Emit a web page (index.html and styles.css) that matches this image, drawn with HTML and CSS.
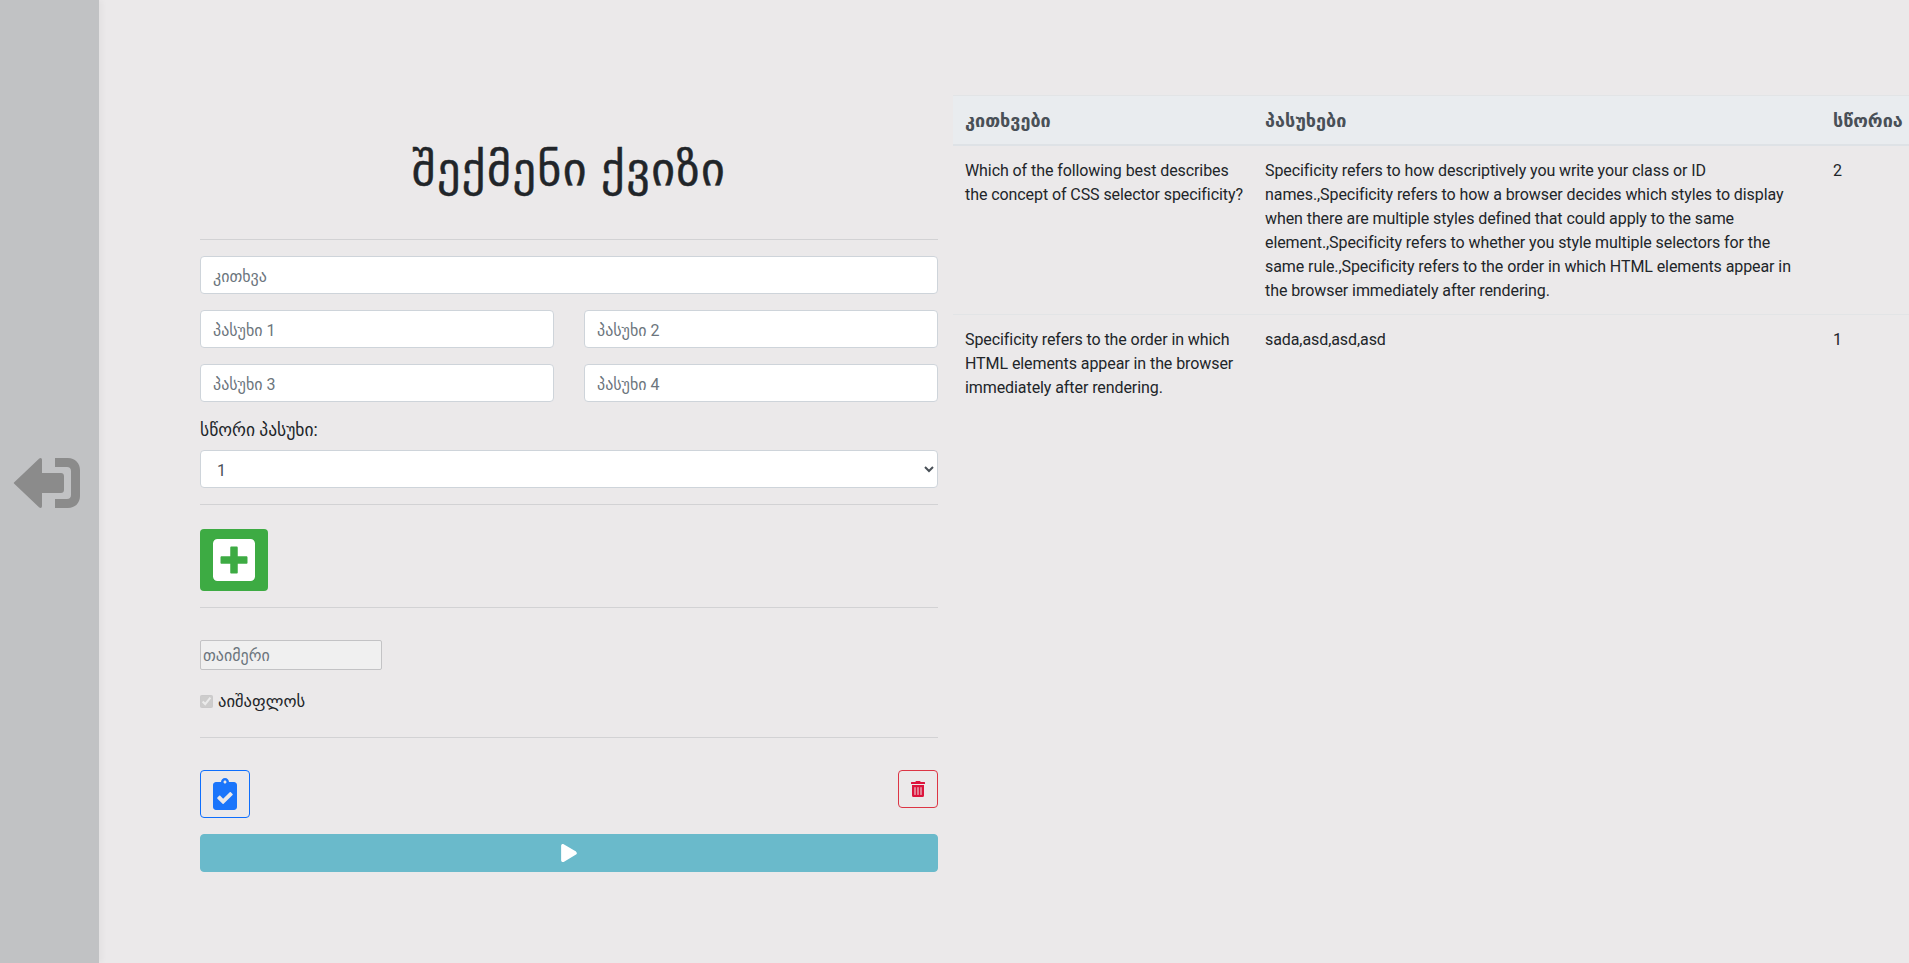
FILE: index.html
```html
<!DOCTYPE html>
<html lang="ka">
<head>
<meta charset="utf-8">
<title>ქვიზი</title>
<link rel="stylesheet" href="styles.css">
</head>
<body>
<aside class="side">
  <svg class="exit" viewBox="0 0 68 52" aria-hidden="true"><path d="M1 25.500 26 1.800c1.500-1.400 3-.8 3 1.200V16h19c1.700 0 3 1.300 3 3v14c0 1.700-1.300 3-3 3H29v13c0 2-1.500 2.600-3 1.200L1 26.500a.7.7 0 0 1 0-1z"/><path d="M42 1h13c7 0 12 5 12 12v26c0 7-5 12-12 12H42v-9h12c2.500 0 4-1.500 4-4V14c0-2.500-1.500-4-4-4H42z"/></svg>
</aside>
<main class="main">
  <section class="form">
    <h1 class="title">შექმენი ქვიზი</h1>
    <hr class="rule rule-first">
    <input class="field" type="text" placeholder="კითხვა">
    <div class="pair">
      <input class="field" type="text" placeholder="პასუხი 1">
      <input class="field" type="text" placeholder="პასუხი 2">
    </div>
    <div class="pair">
      <input class="field" type="text" placeholder="პასუხი 3">
      <input class="field" type="text" placeholder="პასუხი 4">
    </div>
    <label class="lbl" for="correct">სწორი პასუხი:</label>
    <select class="field pick" id="correct"><option>1</option><option>2</option><option>3</option><option>4</option></select>
    <hr class="rule rule-mid">
    <button class="add" type="button" aria-label="add">
      <svg viewBox="0 0 448 512"><path d="M400 32H48C21.500 32 0 53.500 0 80v352c0 26.500 21.500 48 48 48h352c26.500 0 48-21.500 48-48V80c0-26.500-21.500-48-48-48zm-32 252c0 6.600-5.400 12-12 12h-92v92c0 6.600-5.400 12-12 12h-56c-6.600 0-12-5.400-12-12v-92H92c-6.600 0-12-5.400-12-12v-56c0-6.600 5.400-12 12-12h92v-92c0-6.600 5.400-12 12-12h56c6.600 0 12 5.400 12 12v92h92c6.600 0 12 5.400 12 12v56z"/></svg>
    </button>
    <hr class="rule rule-add">
    <input class="timer" type="text" placeholder="თაიმერი" disabled>
    <label class="check"><input type="checkbox" checked disabled><span>აიშაფლოს</span></label>
    <hr class="rule rule-check">
    <div class="actions">
      <button class="save" type="button" aria-label="save">
        <svg viewBox="0 0 384 512"><path d="M336 64h-80c0-35.300-28.700-64-64-64s-64 28.700-64 64H48C21.500 64 0 85.500 0 112v352c0 26.500 21.500 48 48 48h288c26.500 0 48-21.500 48-48V112c0-26.500-21.500-48-48-48zM192 40c13.300 0 24 10.700 24 24s-10.700 24-24 24-24-10.700-24-24 10.700-24 24-24zm121.200 231.800l-143 141.800c-4.700 4.700-12.300 4.600-17-.1l-82.600-83.300c-4.700-4.700-4.600-12.300.1-17L99.100 285c4.700-4.700 12.300-4.600 17 .1l46 46.400 106-105.200c4.700-4.700 12.300-4.600 17 .1l28.200 28.400c4.700 4.800 4.600 12.300-.1 17z"/></svg>
      </button>
      <button class="del" type="button" aria-label="delete">
        <svg viewBox="0 0 448 512"><path d="M32 464a48 48 0 0 0 48 48h288a48 48 0 0 0 48-48V128H32zm272-256a16 16 0 0 1 32 0v224a16 16 0 0 1-32 0zm-96 0a16 16 0 0 1 32 0v224a16 16 0 0 1-32 0zm-96 0a16 16 0 0 1 32 0v224a16 16 0 0 1-32 0zM432 32H312l-9.400-18.700A24 24 0 0 0 281.100 0H166.800a23.720 23.720 0 0 0-21.400 13.300L136 32H16A16 16 0 0 0 0 48v32a16 16 0 0 0 16 16h416a16 16 0 0 0 16-16V48a16 16 0 0 0-16-16z"/></svg>
      </button>
    </div>
    <button class="start" type="button" aria-label="start">
      <svg viewBox="0 0 448 512"><path d="M424.400 214.700L72.400 6.600C43.800-10.300 0 6.100 0 47.900V464c0 39.400 42.700 63.200 72.400 45.300l352-208c31.400-18.500 31.500-64.100 0-82.600z"/></svg>
    </button>
  </section>
  <section class="list">
    <table class="tbl">
      <thead><tr><th class="c1">კითხვები</th><th class="c2">პასუხები</th><th class="c3">სწორია</th></tr></thead>
      <tbody>
        <tr><td>Which of the following best describes the concept of CSS selector specificity?</td><td>Specificity refers to how descriptively you write your class or ID names.,Specificity refers to how a browser decides which styles to display when there are multiple styles defined that could apply to the same element.,Specificity refers to whether you style multiple selectors for the same rule.,Specificity refers to the order in which HTML elements appear in the browser immediately after rendering.</td><td>2</td></tr>
        <tr><td>Specificity refers to the order in which HTML elements appear in the browser immediately after rendering.</td><td>sada,asd,asd,asd</td><td>1</td></tr>
      </tbody>
    </table>
  </section>
</main>
</body>
</html>
```

FILE: styles.css
```css
* { box-sizing: border-box; }
html, body { height: 100%; }
body {
  margin: 0;
  display: flex;
  overflow: hidden;
  background: #ebe9ea;
  color: #212529;
  font-family: Roboto, "Open Sans", "DejaVu Sans", sans-serif;
  font-size: 16px;
  line-height: 24px;
}
.side {
  width: 99px;
  flex: none;
  display: flex;
  align-items: center;
  background: #c1c2c4;
  box-shadow: 3px 0 6px rgba(0,0,0,.04);
  padding-left: 13px;
  padding-top: 2px;
}
.exit { width: 68px; height: 52px; fill: #8b8b8b; }
.main { flex: 1; display: flex; min-width: 0; padding-left: 101px; }
.form { width: 738px; flex: none; display: flex; flex-direction: column; align-items: stretch; }
.title {
  margin: 141px 0 0;
  font-size: 46px;
  line-height: 56px;
  font-weight: 500;
  letter-spacing: 1.500px;
  text-align: center;
  -webkit-text-stroke: .5px #212529;
}
.rule { width: 100%; margin: 0; border: 0; border-top: 1px solid #d2d2d4; }
.rule-first { margin-top: 42px; margin-bottom: 16px; }
.rule-mid { margin-top: 16px; margin-bottom: 24px; }
.rule-add { margin-top: 16px; margin-bottom: 32px; }
.rule-check { margin-top: 24px; margin-bottom: 32px; }
.field {
  display: block;
  width: 100%;
  height: 38px;
  padding: 7px 12px 5px;
  border: 1px solid #ced4da;
  border-radius: 4px;
  background: #fff;
  color: #495057;
  font: inherit;
}
.field::placeholder, .timer::placeholder { color: #6c757d; opacity: 1; }
.pair { display: grid; grid-template-columns: 354px 354px; column-gap: 30px; margin-top: 16px; }
.lbl { margin-top: 16px; margin-bottom: 8px; font-size: 17.500px; line-height: 24px; }
.add {
  width: 68px; height: 62px;
  padding: 0;
  border: 0;
  border-radius: 4px;
  background: #3dab43;
  display: flex; align-items: center; justify-content: center;
}
.add svg { width: 42px; height: 48px; fill: #fff; }
.timer {
  width: 182px; height: 30px;
  padding: 1px 2px;
  border: 1px solid #c3c3c5;
  border-radius: 2px;
  background: #f0f0f0;
  font: inherit;
}
.check { display: flex; align-items: center; gap: 5px; margin-top: 19px; height: 24px; font-size: 16.600px; padding-top: 1px; }
.check input { width: 13px; height: 13px; margin: 0; }
.actions { display: flex; justify-content: space-between; align-items: flex-start; }
.save {
  width: 50px; height: 48px;
  padding: 0;
  border: 1px solid #0d6efd;
  border-radius: 4px;
  background: transparent;
  display: flex; align-items: center; justify-content: center;
}
.save svg { width: 24px; height: 32px; fill: #1a75fb; }
.del {
  width: 40px; height: 38px;
  padding: 0;
  border: 1px solid #dc3545;
  border-radius: 4px;
  background: transparent;
  display: flex; align-items: center; justify-content: center;
}
.del svg { width: 14px; height: 16px; fill: #dc143c; }
.start {
  width: 100%; height: 38px;
  margin-top: 16px;
  padding: 0;
  border: 1px solid #6abacb;
  border-radius: 4px;
  background: #6abacb;
  display: flex; align-items: center; justify-content: center;
}
.start svg { width: 16px; height: 18px; fill: #fff; }
.list { margin-left: 15px; margin-top: 95px; flex: none; width: 960px; }
.tbl { width: 960px; table-layout: fixed; border-collapse: collapse; }
.c1 { width: 300px; }
.c2 { width: 568px; }
.tbl th, .tbl td { padding: 13px 12px 11px; text-align: left; vertical-align: top; border-top: 1px solid #e2e4e6; }
.tbl td { letter-spacing: -.08px; }
.tbl td:first-child { padding-right: 5px; }
.tbl th { background: #e9ecef; color: #495057; font-size: 18px; font-weight: 700; border-bottom: 2px solid #dee2e6; }
```
